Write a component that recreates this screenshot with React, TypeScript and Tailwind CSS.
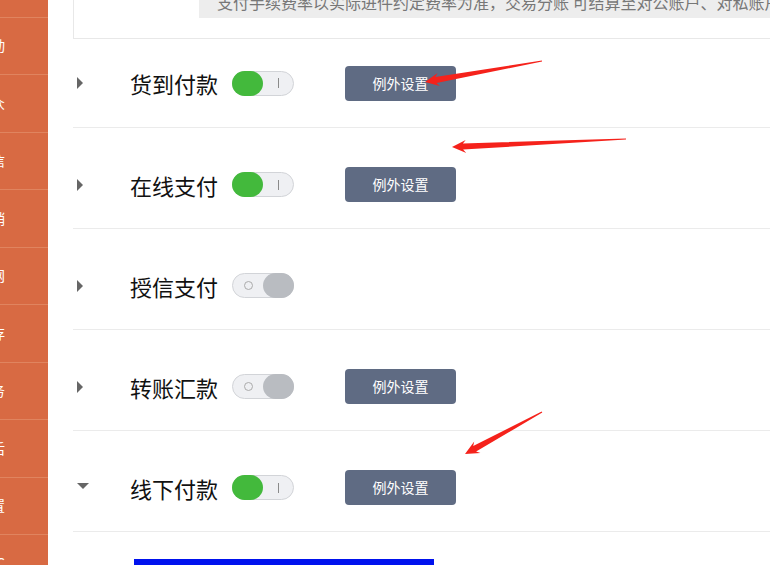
import React from 'react';

const sideItems = ['首页', '互动', '公众', '短信', '营销', '官网', '库存', '服务', '售后', '设置', 'PC'];

type Method = { name: string; on: boolean; open: boolean; setting: boolean };

const methods: Method[] = [
  { name: '货到付款', on: true, open: false, setting: true },
  { name: '在线支付', on: true, open: false, setting: true },
  { name: '授信支付', on: false, open: false, setting: false },
  { name: '转账汇款', on: false, open: false, setting: true },
  { name: '线下付款', on: true, open: true, setting: true },
];

function Toggle({ on }: { on: boolean }) {
  return (
    <div className="flex h-[25px] w-[62px] shrink-0 items-center rounded-full border border-[#d2d4d8] bg-[#eff0f3]">
      {on ? (
        <>
          <div className="h-[25px] w-[31px] -ml-px rounded-full bg-[#43b93c]" />
          <div className="flex flex-1 justify-center">
            <div className="h-[10px] w-px bg-[#8a8a8a]" />
          </div>
        </>
      ) : (
        <>
          <div className="flex flex-1 justify-center">
            <div className="h-[9px] w-[9px] rounded-full border-[1.5px] border-[#ababab]" />
          </div>
          <div className="h-[25px] w-[31px] -mr-px rounded-full bg-[#b9bcc1]" />
        </>
      )}
    </div>
  );
}

function Arrow({ x1, y1, x2, y2 }: { x1: number; y1: number; x2: number; y2: number }) {
  // tail (x1,y1) -> tip (x2,y2)
  const dx = x1 - x2;
  const dy = y1 - y2;
  const len = Math.sqrt(dx * dx + dy * dy);
  const ux = dx / len;
  const uy = dy / len;
  const px = -uy;
  const py = ux;
  const local: [number, number][] = [
    [0, 0],
    [14, -6.5],
    [11, -3],
    [len, -0.6],
    [len, 0.6],
    [11, 3],
    [14, 6.5],
  ];
  const pts = local
    .map(([a, b]) => `${(x2 + ux * a + px * b).toFixed(1)},${(y2 + uy * a + py * b).toFixed(1)}`)
    .join(' ');
  return <polygon points={pts} fill="#f5221b" />;
}

export default function App() {
  return (
    <div className="relative flex h-[565px] w-[770px] overflow-hidden bg-white font-['Noto_Sans_CJK_SC','Noto_Sans',sans-serif]">
      <aside className="-mt-[40px] flex w-[48px] shrink-0 flex-col bg-[#d86a43]">
        {sideItems.map((s) => (
          <div key={s} className="flex h-[57.5px] shrink-0 items-center justify-end overflow-hidden border-b border-[#e0845f]">
            <span className="mr-[43px] whitespace-nowrap text-[14px] text-white">{s}</span>
          </div>
        ))}
      </aside>

      <main className="ml-[25px] min-w-0 flex-1">
        <div className="flex h-[39px] flex-col border-b border-l border-[#e8e8e8] pl-[125px]">
          <div className="-mt-[18px] flex h-[36px] shrink-0 items-center overflow-hidden bg-[#ededed] pl-[18px] pt-[3px]">
            <span className="whitespace-nowrap text-[16px] text-[#777]">
              支付手续费率以实际进件约定费率为准，交易分账 可结算至对公账户、对私账户
            </span>
          </div>
        </div>

        {methods.map((m, i) => (
          <div
            key={m.name}
            className={
              i === 0
                ? 'flex h-[89px] items-center border-b border-[#ebebeb]'
                : 'flex h-[101px] items-center border-b border-[#ebebeb] pt-[13px]'
            }
          >
            <div className="flex w-[57px] shrink-0 pl-[4px]">
              {m.open ? (
                <div className="-mt-[4px] h-0 w-0 border-x-[6px] border-t-[6px] border-x-transparent border-t-[#666]" />
              ) : (
                <div className="h-0 w-0 border-y-[6px] border-l-[6px] border-y-transparent border-l-[#666]" />
              )}
            </div>
            <div className="w-[102px] shrink-0 text-[22px] leading-none text-[#111]">{m.name}</div>
            <Toggle on={m.on} />
            {m.setting && (
              <button className="ml-[51px] flex h-[35px] w-[111px] items-center justify-center rounded-[4px] bg-[#5f6b83] text-[14px] text-white">
                例外设置
              </button>
            )}
          </div>
        ))}

        <div className="ml-[61px] mt-[27px] h-[10px] w-[300px] bg-[#0012ee]" />
      </main>

      <svg className="pointer-events-none absolute left-0 top-0" width="770" height="565">
        <Arrow x1={542} y1={61} x2={425} y2={82} />
        <Arrow x1={626} y1={139} x2={452} y2={147} />
        <Arrow x1={542} y1={412} x2={465} y2={454} />
      </svg>
    </div>
  );
}
